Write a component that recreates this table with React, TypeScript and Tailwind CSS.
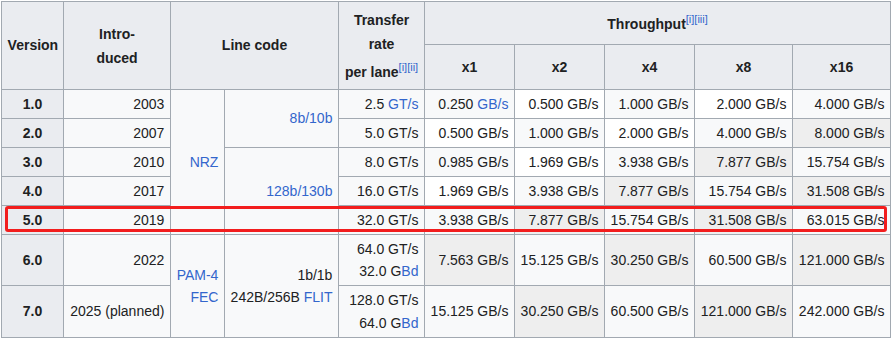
import React from "react";

const L = ({ children }: { children: React.ReactNode }) => (
  <span className="text-[#3366cc]">{children}</span>
);

const Sup = ({ children }: { children: React.ReactNode }) => (
  <span className="relative -top-[6px] text-[11px] leading-none text-[#3366cc] font-normal align-baseline">{children}</span>
);

const TH = "border border-[#a2a9b1] bg-[#eaecf0] font-bold text-center align-middle px-[5.6px] py-[2.8px]";
const TD = "border border-[#a2a9b1] text-right align-middle px-[5.6px] py-[2.8px] whitespace-nowrap";
const BG: Record<string, string> = {
  f: "bg-[#f8f9fa]",
  w: "bg-white",
  e: "bg-[#eeeeee]",
};

type Cell = { t: React.ReactNode; c: string };

const tp: Cell[][] = [
  [
    { t: <>0.250 <L>GB/s</L></>, c: "f" },
    { t: "0.500 GB/s", c: "w" },
    { t: "1.000 GB/s", c: "f" },
    { t: "2.000 GB/s", c: "w" },
    { t: "4.000 GB/s", c: "f" },
  ],
  [
    { t: "0.500 GB/s", c: "w" },
    { t: "1.000 GB/s", c: "f" },
    { t: "2.000 GB/s", c: "w" },
    { t: "4.000 GB/s", c: "f" },
    { t: "8.000 GB/s", c: "e" },
  ],
  [
    { t: "0.985 GB/s", c: "f" },
    { t: "1.969 GB/s", c: "w" },
    { t: "3.938 GB/s", c: "f" },
    { t: "7.877 GB/s", c: "e" },
    { t: "15.754 GB/s", c: "f" },
  ],
  [
    { t: "1.969 GB/s", c: "w" },
    { t: "3.938 GB/s", c: "f" },
    { t: "7.877 GB/s", c: "e" },
    { t: "15.754 GB/s", c: "f" },
    { t: "31.508 GB/s", c: "e" },
  ],
  [
    { t: "3.938 GB/s", c: "f" },
    { t: "7.877 GB/s", c: "e" },
    { t: "15.754 GB/s", c: "f" },
    { t: "31.508 GB/s", c: "e" },
    { t: "63.015 GB/s", c: "f" },
  ],
  [
    { t: "7.563 GB/s", c: "e" },
    { t: "15.125 GB/s", c: "f" },
    { t: "30.250 GB/s", c: "e" },
    { t: "60.500 GB/s", c: "f" },
    { t: "121.000 GB/s", c: "e" },
  ],
  [
    { t: "15.125 GB/s", c: "f" },
    { t: "30.250 GB/s", c: "e" },
    { t: "60.500 GB/s", c: "f" },
    { t: "121.000 GB/s", c: "e" },
    { t: "242.000 GB/s", c: "f" },
  ],
];

const TP = ({ i }: { i: number }) => (
  <>
    {tp[i].map((c, k) => (
      <td key={k} className={`${TD} ${BG[c.c]}`}>
        {c.t}
      </td>
    ))}
  </>
);

export default function App() {
  return (
    <div className="relative w-[892px] h-[340px] bg-white pl-[1px] pt-[1px] font-['Liberation_Sans',Arial,sans-serif] text-[14px] leading-[22.4px] text-[#202122]">
      <table className="table-fixed border-collapse w-[890px]">
        <colgroup>
          <col className="w-[62px]" />
          <col className="w-[107px]" />
          <col className="w-[54px]" />
          <col className="w-[114px]" />
          <col className="w-[86px]" />
          <col className="w-[90px]" />
          <col className="w-[90px]" />
          <col className="w-[90px]" />
          <col className="w-[98px]" />
          <col className="w-[98px]" />
        </colgroup>
        <thead>
          <tr className="h-[43px]">
            <th rowSpan={2} className={TH}>Version</th>
            <th rowSpan={2} className={`${TH} leading-[24px]`}>
              Intro-
              <br />
              duced
            </th>
            <th rowSpan={2} colSpan={2} className={TH}>Line code</th>
            <th rowSpan={2} className={`${TH} leading-[24px]`}>
              <div>Transfer</div>
              <div>rate</div>
              <div className="pt-[4px]">
                per lane<Sup>[i][ii]</Sup>
              </div>
            </th>
            <th colSpan={5} className={`${TH} pt-[5px]`}>
              Throughput<Sup>[i][iii]</Sup>
            </th>
          </tr>
          <tr className="h-[45px]">
            <th className={TH}>x1</th>
            <th className={TH}>x2</th>
            <th className={TH}>x4</th>
            <th className={TH}>x8</th>
            <th className={TH}>x16</th>
          </tr>
        </thead>
        <tbody>
          <tr>
            <th className={TH}>1.0</th>
            <td className={`${TD} bg-[#f8f9fa]`}>2003</td>
            <td rowSpan={5} className={`${TD} bg-[#f8f9fa]`}>
              <L>NRZ</L>
            </td>
            <td rowSpan={2} className={`${TD} bg-[#f8f9fa]`}>
              <L>8b/10b</L>
            </td>
            <td className={`${TD} bg-[#f8f9fa]`}>
              2.5 <L>GT/s</L>
            </td>
            <TP i={0} />
          </tr>
          <tr>
            <th className={TH}>2.0</th>
            <td className={`${TD} bg-[#f8f9fa]`}>2007</td>
            <td className={`${TD} bg-[#f8f9fa]`}>5.0 GT/s</td>
            <TP i={1} />
          </tr>
          <tr>
            <th className={TH}>3.0</th>
            <td className={`${TD} bg-[#f8f9fa]`}>2010</td>
            <td rowSpan={3} className={`${TD} bg-[#f8f9fa]`}>
              <L>128b/130b</L>
            </td>
            <td className={`${TD} bg-[#f8f9fa]`}>8.0 GT/s</td>
            <TP i={2} />
          </tr>
          <tr>
            <th className={TH}>4.0</th>
            <td className={`${TD} bg-[#f8f9fa]`}>2017</td>
            <td className={`${TD} bg-[#f8f9fa]`}>16.0 GT/s</td>
            <TP i={3} />
          </tr>
          <tr>
            <th className={TH}>5.0</th>
            <td className={`${TD} bg-[#f8f9fa]`}>2019</td>
            <td className={`${TD} bg-[#f8f9fa]`}>32.0 GT/s</td>
            <TP i={4} />
          </tr>
          <tr>
            <th className={TH}>6.0</th>
            <td className={`${TD} bg-[#f8f9fa]`}>2022</td>
            <td rowSpan={2} className={`${TD} bg-[#f8f9fa]`}>
              <L>PAM-4</L>
              <br />
              <L>FEC</L>
            </td>
            <td rowSpan={2} className={`${TD} bg-[#f8f9fa]`}>
              1b/1b
              <br />
              242B/256B <L>FLIT</L>
            </td>
            <td className={`${TD} bg-[#f8f9fa]`}>
              64.0 GT/s
              <br />
              32.0 G<L>Bd</L>
            </td>
            <TP i={5} />
          </tr>
          <tr>
            <th className={TH}>7.0</th>
            <td className={`${TD} bg-[#f8f9fa]`}>2025 (planned)</td>
            <td className={`${TD} bg-[#f8f9fa]`}>
              128.0 GT/s
              <br />
              64.0 G<L>Bd</L>
            </td>
            <TP i={6} />
          </tr>
        </tbody>
      </table>
      <div className="absolute left-[5px] top-[206px] w-[882px] h-[26px] border-[3px] border-[#f21d1d] rounded-[3px] pointer-events-none" />
    </div>
  );
}
